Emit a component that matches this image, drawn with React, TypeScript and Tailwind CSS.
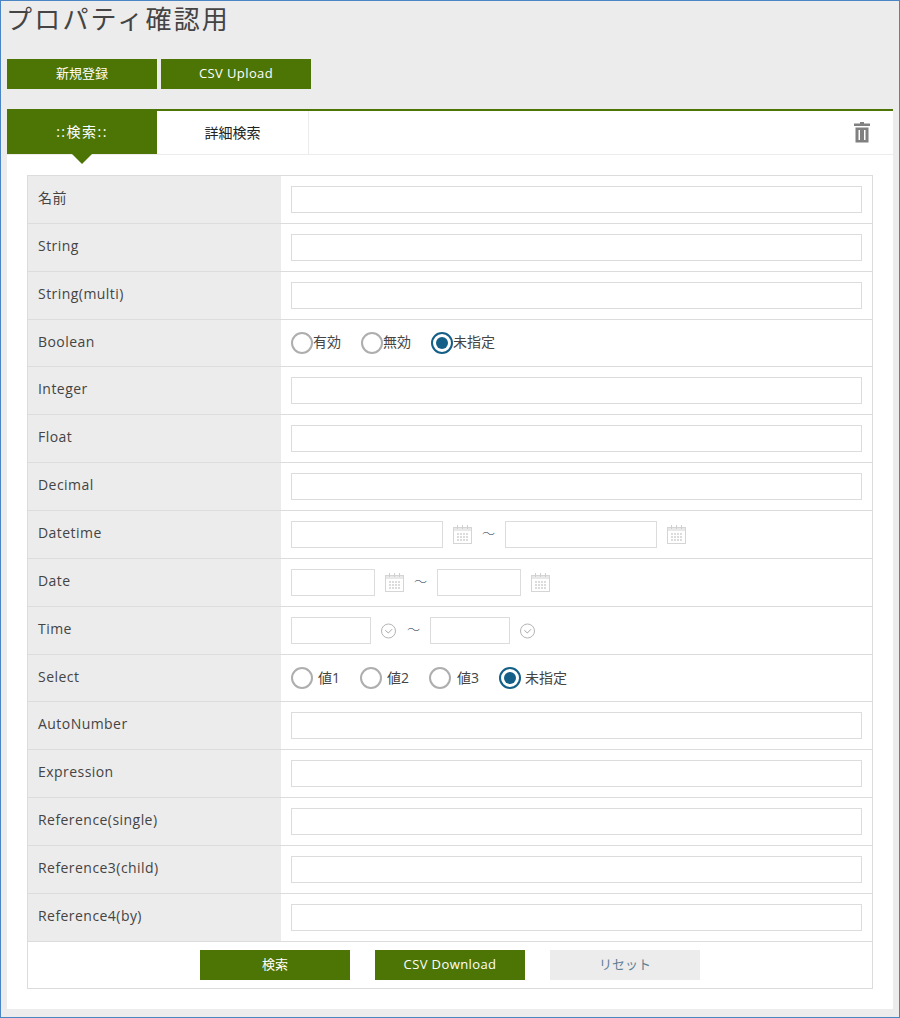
import React from "react";

const font = "[font-family:'Open_Sans','Noto_Sans_CJK_JP',sans-serif]";

function Calendar() {
  return (
    <svg width="20" height="20" viewBox="0 0 20 20" className="shrink-0">
      <rect x="0.5" y="2.5" width="18" height="16" fill="#fff" stroke="#d5d5d5" />
      <rect x="1" y="3" width="17" height="3" fill="#e8e8e8" />
      {[4.5, 9.5, 14.5].map((x) => (
        <rect key={x} x={x - 0.5} y="0" width="1" height="4" fill="#cfcfcf" />
      ))}
      {[8, 11, 14].map((y) =>
        [4, 7, 10, 13].map((x) => <rect key={`${x}-${y}`} x={x} y={y} width="2" height="2" fill="#dcdcdc" />)
      )}
    </svg>
  );
}

function Clock() {
  return (
    <svg width="16" height="16" viewBox="0 0 16 16" className="shrink-0">
      <circle cx="7.5" cy="8" r="7" fill="none" stroke="#b4b4b4" strokeWidth="1" />
      <path d="M4.3 7.2 L7.3 10 L11.1 6.2" fill="none" stroke="#a8a8a8" strokeWidth="1" />
    </svg>
  );
}

function Radio({ checked }: { checked?: boolean }) {
  return (
    <span
      className={`flex h-[22px] w-[22px] shrink-0 items-center justify-center rounded-full border-2 bg-white ${
        checked ? "border-[#135f87]" : "border-[#aeaeae]"
      }`}
    >
      {checked && <span className="h-[12px] w-[12px] rounded-full bg-[#135f87]" />}
    </span>
  );
}

function TextInput({ w }: { w: string }) {
  return <div className={`h-[27px] shrink-0 border border-[#dcdcdc] bg-white ${w}`} />;
}

function Tilde({ className }: { className: string }) {
  return <span className={`-mt-[2px] text-center text-[13px] leading-none font-thin text-[#0b2c44] ${className}`}>～</span>;
}

function Row({ label, short, children }: { label: string; short?: boolean; children: React.ReactNode }) {
  return (
    <div className={`flex border-b border-[#dcdcdc] ${short ? "h-[47px]" : "h-[48px]"}`}>
      <div
        className={`flex w-[253px] shrink-0 items-center bg-[#ececec] pl-[10px] text-[14px] tracking-[0.45px] text-[#444] ${
          short ? "pb-[3px]" : "pb-[5px]"
        }`}
      >
        {label}
      </div>
      <div className="flex min-w-0 flex-1 items-center pl-[10px]">{children}</div>
    </div>
  );
}

const full = <TextInput w="w-[571px]" />;

function Btn({ label, gray, latin }: { label: string; gray?: boolean; latin?: boolean }) {
  return (
    <div
      className={`flex h-[30px] w-[150px] items-center justify-center text-[13px] ${latin ? "tracking-[0.4px]" : ""} ${
        gray ? "bg-[#ececec] text-[#5f7f95]" : "bg-[#4d7506] text-white"
      }`}
    >
      {label}
    </div>
  );
}

export default function App() {
  return (
    <div className={`h-[1018px] w-[900px] overflow-hidden border border-[#4b86c4] bg-[#ececec] text-[#444] ${font}`}>
      <div className="px-[6px]">
        <h1 className="-ml-[1px] h-[58px] text-[26px] leading-[36px] tracking-[2.2px] font-normal text-[#444]">プロパティ確認用</h1>
        <div className="flex gap-[4px]">
          <Btn label="新規登録" />
          <Btn label="CSV Upload" latin />
        </div>
        <div className="mt-[20px] h-[900px] border-t-2 border-[#4d7506] bg-white">
          <div className="relative flex h-[44px] border-b border-[#ececec]">
            <div className="-mt-[2px] flex h-[45px] w-[150px] items-center justify-center bg-[#4d7506] text-[14px] tracking-[1.5px] text-white">::検索::</div>
            <div className="flex w-[152px] items-center justify-center border-r border-[#ececec] text-[14px] text-[#222]">詳細検索</div>
            <div className="absolute left-[65px] top-[43px] h-0 w-0 border-x-[10px] border-t-[10px] border-x-transparent border-t-[#4d7506]" />
            <svg width="18" height="21" viewBox="0 0 18 21" className="absolute right-[22px] top-[11px]">
              <rect x="7" y="0" width="4" height="2" fill="#808080" />
              <rect x="1" y="1.5" width="16" height="2.5" fill="#808080" />
              <path fillRule="evenodd" d="M2.5 5.5H15.5V20.5H2.5Z M5.5 8V18H7V8Z M11 8V18H12.5V8Z" fill="#808080" />
            </svg>
          </div>
          <div className="mx-[20px] mt-[20px] w-[846px] border border-[#dcdcdc]">
            <Row label="名前">{full}</Row>
            <Row label="String">{full}</Row>
            <Row label="String(multi)">{full}</Row>
            <Row label="Boolean" short>
              <div className="flex items-center text-[14px]">
                <Radio /><span className="w-[48px] pb-[3px]">有効</span>
                <Radio /><span className="w-[48px] pb-[3px]">無効</span>
                <Radio checked /><span className="pb-[3px]">未指定</span>
              </div>
            </Row>
            <Row label="Integer">{full}</Row>
            <Row label="Float">{full}</Row>
            <Row label="Decimal">{full}</Row>
            <Row label="Datetime">
              <TextInput w="w-[152px]" />
              <span className="ml-[10px]"><Calendar /></span>
              <Tilde className="w-[33px] -ml-[1px]" />
              <TextInput w="w-[152px]" />
              <span className="ml-[10px]"><Calendar /></span>
            </Row>
            <Row label="Date">
              <TextInput w="w-[84px]" />
              <span className="ml-[10px]"><Calendar /></span>
              <Tilde className="w-[33px] -ml-[1px]" />
              <TextInput w="w-[84px]" />
              <span className="ml-[10px]"><Calendar /></span>
            </Row>
            <Row label="Time">
              <TextInput w="w-[80px]" />
              <span className="ml-[10px]"><Clock /></span>
              <Tilde className="w-[33px]" />
              <TextInput w="w-[80px]" />
              <span className="ml-[10px]"><Clock /></span>
            </Row>
            <Row label="Select" short>
              <div className="flex items-center text-[14px]">
                <Radio /><span className="w-[47px] pb-[2px] pl-[5px]">値1</span>
                <Radio /><span className="w-[47px] pb-[2px] pl-[5px]">値2</span>
                <Radio /><span className="w-[48px] pb-[2px] pl-[6px]">値3</span>
                <Radio checked /><span className="pb-[2px] pl-[4px]">未指定</span>
              </div>
            </Row>
            <Row label="AutoNumber">{full}</Row>
            <Row label="Expression">{full}</Row>
            <Row label="Reference(single)">{full}</Row>
            <Row label="Reference3(child)">{full}</Row>
            <Row label="Reference4(by)">{full}</Row>
            <div className="flex h-[46px] items-start justify-center gap-[25px] pt-[8px]">
              <Btn label="検索" />
              <Btn label="CSV Download" latin />
              <Btn label="リセット" gray />
            </div>
          </div>
        </div>
      </div>
    </div>
  );
}
